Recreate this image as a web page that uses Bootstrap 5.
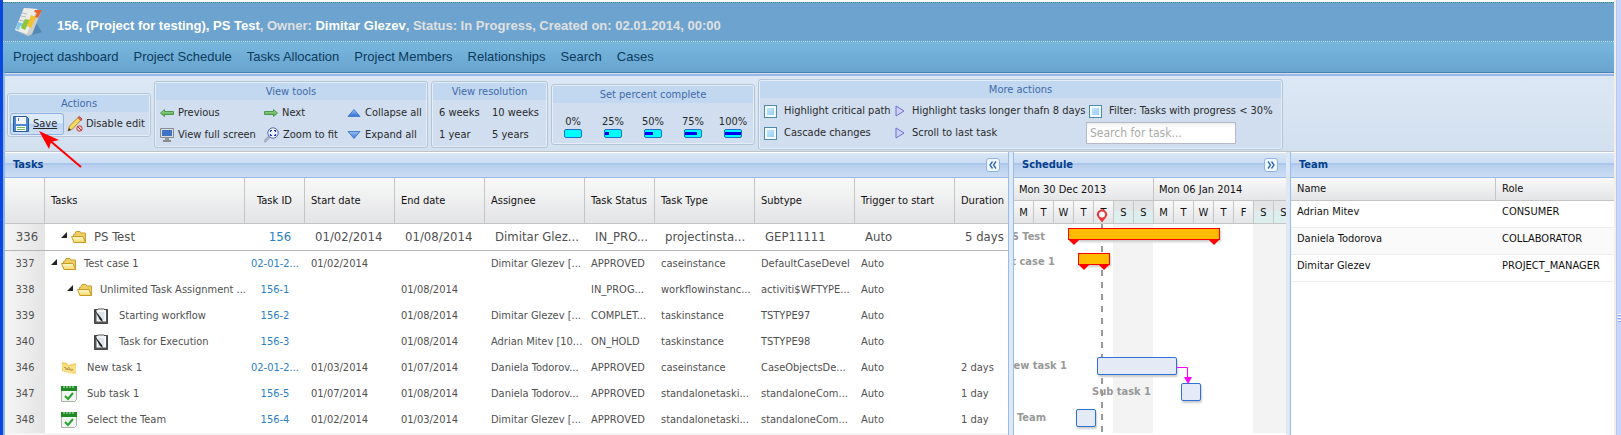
<!DOCTYPE html>
<html lang="en">
<head>
<meta charset="utf-8">
<meta name="viewport" content="width=device-width, initial-scale=1">
<title>PS Test - Project Schedule</title>
<link href="https://cdn.jsdelivr.net/npm/bootstrap@5.3.0/dist/css/bootstrap.min.css" rel="stylesheet">
<style>
body{font-family:"DejaVu Sans Condensed","DejaVu Sans",sans-serif;font-size:11px;line-height:16px;color:#222;background:#fff;overflow:hidden}
a{text-decoration:none}
svg{display:block;flex:none}
.frame{border-left:3px solid #0a46e0}
.edge{width:7px;border-left:2px solid #f3efe6;background:linear-gradient(90deg,#b4c7f5 1px,#c6d6fc 1px)}
.grip{width:3px;height:8px;margin:314px 0 0 auto;background:repeating-linear-gradient(#f4f8ff 0 1px,#8fa9e6 1px 2px,#c6d6fc 2px 3px)}
.titlebar{margin-top:2px;height:40px;border-top:1px dotted #3f8a76;border-bottom:1px dotted #c4e2f1;background:#6ca3cf;padding:0 11px;gap:13px;font:bold 13px/18px "Liberation Sans",sans-serif;color:#e0e0e0}
.titlebar b{color:#fff}
.titlebar h1{font:inherit;padding-top:7px}
.mainnav{height:30px;background:linear-gradient(#77b7de,#69a4cf);padding:0 10px;gap:15px;font:13px/30px "Liberation Sans",sans-serif}
.mainnav a{color:#0b3a5c}
.tools{border-top:1px solid #4682b4;box-shadow:inset 0 1px #d5e0ee,inset 0 3px #99b8ea;background:linear-gradient(#dde8f5,#d2e0ef);border-bottom:1px solid #c0c4c8;height:80px;padding:5px 4px 0;gap:3px}
.tgroup{border:1px solid #b4c5d6;border-radius:3px;padding:1px;background:#e4edf8;flex:none}
.tgroup h2{margin:0;font-size:11px;font-weight:400;line-height:17px;text-align:center;background:#c2d8f0;color:#3e6aaa}
.tbody{background:#d0deef;display:grid;grid-auto-rows:22px;align-items:center;color:#2a2a2a}
.tb{border:0;background:none;padding:0;display:flex;align-items:center;gap:4px;color:#2a2a2a;white-space:nowrap;text-align:left}
.g-act .tbody{grid-template-columns:54px 84px;padding:1px 1px 0}
.g-act .save{border:1px solid #8db2e3;border-radius:3px;background:linear-gradient(#dceafa 45%,#bcd3f2 50%,#cfe0f6);height:22px;padding-left:2px;text-decoration:underline}
.g-act .dis{padding-left:3px;gap:3px}
.g-view .tbody{grid-template-columns:104px 83px 79px;padding:2px 0 0 4px}
.g-res .tbody{grid-template-columns:53px 54px;padding:2px 0 0 6px}
.g-pct .tbody{grid-template-columns:repeat(5,40px);grid-auto-rows:40px;padding:0}
.pct{flex-direction:column;gap:0;justify-content:flex-end;padding-top:6px;line-height:14px}
.meter{width:18px;height:9px;border:1px solid #1c6fd0;border-radius:2px;background:#0ff;padding:2px 0}
.meter i{display:block;height:3px;background:#0000f0}
.g-more .tbody{grid-template-columns:131px 194px 192px;padding:2px 0 4px 4px}
.g-more .tb{gap:7px}
.chk{appearance:none;flex:none;width:13px;height:13px;margin:0 7px 0 0;border:1px solid #4f8aa6;background:linear-gradient(135deg,#cfeafd,#8cc9f3);box-shadow:inset 0 0 0 2px #f4fbff}
.find{width:150px;height:22px;border:1px solid #b5b8c8;background:linear-gradient(#eee,#fff 4px);font-size:12px;padding:0 3px;margin-left:-3px}
.find::placeholder{color:#aaa}
.panel-head{height:26px;padding:0 8px;border-top:1px solid #fff;border-bottom:1px solid #99bce8;background:linear-gradient(#dae7f6,#cbddf3 10px,#abc7ec 10px,#abc7ec 12px,#b8cfee 12px,#cbddf3)}
.panel-head h2{margin:0;font-size:11px;font-weight:700;color:#04408c}
.fold{width:14px;height:14px;border:1px solid #8db2e3;border-radius:3px;background:#f2f8ff;padding:0;display:grid;place-items:center}
.p-tasks{width:1004px;flex:none;border-right:1px solid #99bce8;background:#f5f5f5}
.p-sched{width:273px;flex:none;border-left:1px solid #99bce8;margin-left:4px;background:#fff;overflow:hidden}
.p-team{border-left:1px solid #99bce8;margin-left:4px;min-width:0}
.panes{background:#dfe8f6}
.tools,.panes{border-left:2px solid #8fb4ea}
.tools{padding-left:2px}
table{table-layout:fixed;width:100%;border-collapse:separate;border-spacing:0}
th{font-weight:400;color:#111;background:linear-gradient(#f9f9f9,#e3e4e6);border-right:1px solid #c5c5c5;border-bottom:1px solid #c5c5c5}
th:last-child{border-right:0}
th,td{padding:0 0 0 6px;white-space:nowrap;overflow:hidden}
.tasks th{height:46px;padding-top:1px}
.tasks td{height:26px;background:#fff;color:#505050}
.tasks tr.root td{height:27px;font-size:13px;padding-left:10px;border-bottom:1px solid #b5b5b5}
.tasks td:first-child{background:linear-gradient(90deg,#f5f5f5,#e4e4e4);padding:0;text-align:center}
.tasks tr.root td:first-child{padding-left:4px}
.tasks td:nth-child(3),.tasks th:nth-child(3){text-align:center;padding-left:0;padding-right:0}
.tasks td a{color:#2a7fc4}
.tasks tr.root td:nth-child(2),.tasks td:nth-child(2){padding-left:6px;overflow:visible}
.node{display:flex;align-items:center;gap:7px}
.tree{display:flex;align-items:center}
.tree .tw{margin:0 4px 5px 0}
.leaf{gap:10px;padding-left:10px}
.root .node{padding-left:10px}
.d1{padding-left:16px}
.node.d2{padding-left:42px}
.team th{height:23px}
.team td{height:27px;color:#111;border-bottom:1px solid #ededed;padding-bottom:4px}
.team tr:nth-child(even) td{background:#fafafa}
.weeks,.days{display:flex;background:linear-gradient(#f9f9f9,#e3e4e6);color:#111}
.weeks span{height:23px;line-height:24px;flex:0 0 140px;padding-left:5px;border-right:1px solid #c5c5c5;border-bottom:1px solid #c5c5c5}
.days span{flex:0 0 20px;height:23px;line-height:23px;text-align:center;border-right:1px solid #c5c5c5;border-bottom:1px solid #c5c5c5}
.days .we{background:linear-gradient(#e4e5e7 10px,#dceeed 10px)}
.chart{position:relative;height:209px;background:linear-gradient(90deg,transparent 99px,#f3f3f3 99px,#f3f3f3 139px,transparent 139px,transparent 239px,#f3f3f3 239px);overflow:hidden}
.lane{position:relative;height:26px}
.lane:first-child{height:27px}
.gbar{position:absolute;top:3px;height:18px;border:1px solid #2f72d6;border-radius:2px;background:#e4ebf6;box-shadow:1px 2px 2px #ccc}
.gbar.sum{height:12px;border:1px solid #f00;border-radius:0;background:#ffbc00}
.lane:first-of-type .gbar{top:4px}
.gbar em{position:absolute;right:100%;top:0;margin-right:31px;white-space:nowrap;font-style:normal;font-weight:700;color:#999}
.gbar.sum em{margin-right:24px}
.sum::before,.sum::after{content:"";position:absolute;top:11px;border:5px solid transparent;border-top-color:#f00;border-bottom:0}
.sum::before{left:0}
.sum::after{right:0}
.overlay{position:absolute;left:0;top:0}
.pin{position:absolute;left:82px;top:-15px;z-index:2}
.pointer{position:absolute;left:36px;top:130px;z-index:3}
</style>
</head>
<body>
<svg width="0" height="0" class="position-absolute" aria-hidden="true">
<defs>
<linearGradient id="fy" x2="0" y2="1"><stop stop-color="#fffbd0"/><stop offset="1" stop-color="#f6d766"/></linearGradient>
<symbol id="folder" viewBox="0 0 16 14"><path d="M2.500 12V4.500h1l1.500-3h4l1 1.500h4.500v9.500z" fill="#efcf62" stroke="#c79f35"/><path d="M.5 6.500h11.500l2.500 6H3z" fill="url(#fy)" stroke="#c79a25"/></symbol>
<symbol id="tw" viewBox="0 0 6 6"><path d="M6 0v6H0z" fill="#222"/></symbol>
<symbol id="clip" viewBox="0 0 16 16"><path d="M1.500 1.500h13v14h-13z" fill="#555" stroke="#444"/><path d="M3.500 2h9.500v11.500h-9.500z" fill="#f4f6f8"/><path d="M5 5h6M5 7h6M5 9h6M5 11h6" stroke="#c9d3de"/><path d="M5 0h6v2H5z" fill="#aaa"/><path d="M1 1l8 10 1 3-3-2z" fill="#222"/></symbol>
<symbol id="case" viewBox="0 0 16 14"><path d="M1 1l5 1 1 2 8-2v11L8 12l-7-2z" fill="#f3cf62"/><path d="M1 3l7 2 7-1v9L2 10z" fill="#fadf86"/><path d="M3 7q1-2 2 0t2 0 2 1 3 0M4 8l8 1" fill="none" stroke="#b89a50"/></symbol>
<symbol id="cal" viewBox="0 0 16 16"><path d="M.5.500h15v13l-2 2H.5z" fill="#f3f5f3" stroke="#aab2aa"/><path d="M0 0h16v5H0z" fill="#1d8a24"/><path d="M3 0v2M6 0v2M9 0v2M12 0v2" stroke="#d5f0d5"/><path d="M4 10l3 3 5-6" fill="none" stroke="#23a52b" stroke-width="2"/></symbol>
<linearGradient id="gg" x2="0" y2="1"><stop stop-color="#b4e3a1"/><stop offset="1" stop-color="#3d9d3d"/></linearGradient>
<linearGradient id="bg" x2="0" y2="1"><stop stop-color="#9cc4fa"/><stop offset="1" stop-color="#2f6cd8"/></linearGradient>
<symbol id="arr" viewBox="0 0 14 8"><path d="M.5 4L4.500.500V2.500h9v3h-9v2z" fill="url(#gg)" stroke="#4a9a4a"/></symbol>
<symbol id="tri" viewBox="0 0 10 12"><path d="M1 1l8 5-8 5z" fill="#cfd0fb" stroke="#6f6fd0"/></symbol>
</defs>
</svg>
<div class="frame d-flex min-vh-100">
<div class="flex-grow-1 d-flex flex-column overflow-hidden">
<header>
<div class="titlebar d-flex align-items-center">
<svg width="30" height="30" viewBox="0 0 28 30"><path d="M17 28l10-3-6-9z" fill="#3d6f98" opacity=".5"/><path d="M9 1l13 1 4 3-9 22-4 2L0 23z" fill="#cfcfca"/><path d="M9 1l13 1-10 25L0 23z" fill="#ecece9"/><path d="M7 6l5 1M6 9l5 1M4 13l5 1" stroke="#bbb"/><path d="M3 15l7 2-1 3-4-1-1 4-3-1z" fill="#7cc8e6"/><path d="M10 12l5 1-5 10-4-2 2-5z" fill="#8cc63f"/><path d="M16 8l5 2-5 11-4-2z" fill="#f0c330"/><path d="M20 3l7 0-4 8-3-1 2-4-3-1z" fill="#e8642c"/></svg>
<h1 class="m-0"><b>156, (Project for testing), PS Test</b>, Owner: <b>Dimitar Glezev</b>, Status: In Progress, Created on: 02.01.2014, 00:00</h1>
</div>
<nav class="mainnav d-flex"><a href="#">Project dashboard</a><a href="#">Project Schedule</a><a href="#">Tasks Allocation</a><a href="#">Project Members</a><a href="#">Relationships</a><a href="#">Search</a><a href="#">Cases</a></nav>
</header>
<div class="tools d-flex align-items-center">
<section class="tgroup g-act"><h2>Actions</h2><div class="tbody">
<button class="tb save"><svg width="16" height="16" viewBox="0 0 16 16"><path d="M.5.500h13l2 2v13H.5z" fill="#4c86d0" stroke="#2a5ba0"/><path d="M3 1h10v7H3z" fill="#f1f5fb"/><path d="M5 2h1v3H5z" fill="#4c86d0"/><path d="M3 10h10v5H3z" fill="#fff"/><path d="M4 11.500h8M4 13.500h8" stroke="#6fbd5a"/></svg>Save</button>
<button class="tb dis"><svg width="16" height="16" viewBox="0 0 16 16"><path d="M1 15l1.500-5L11 1.500 14 4 5.500 13z" fill="#f7d960" stroke="#b28a2c"/><path d="M11 1.500l1.500-1L15 3l-1 1.500z" fill="#e06868" stroke="#b44"/><path d="M1 15l1-3 2 2z" fill="#333"/><circle cx="12.500" cy="12.500" r="2.700" fill="#f8d0d0" stroke="#c92c2c"/><path d="M10.500 10.500l4 4" stroke="#c92c2c"/></svg>Disable edit</button>
</div></section>
<section class="tgroup g-view"><h2>View tools</h2><div class="tbody">
<button class="tb"><svg width="14" height="8"><use href="#arr"/></svg>Previous</button>
<button class="tb"><svg width="14" height="8" viewBox="0 0 14 8"><path d="M13.500 4L9.500.500V2.500h-9v3h9v2z" fill="url(#gg)" stroke="#4a9a4a"/></svg>Next</button>
<button class="tb"><svg width="14" height="8" viewBox="0 0 14 8"><path d="M7 .5L13 7.500H1z" fill="url(#bg)" stroke="#4a7fd0"/></svg>Collapse all</button>
<button class="tb"><svg width="14" height="16" viewBox="0 0 14 16"><path d="M.5 1.500h13v9H.5z" fill="#d8dbe0" stroke="#888d95"/><path d="M2 3h10v6H2z" fill="#3f74c4"/><path d="M5 11h4v2H5z" fill="#999"/><path d="M3 14h8" stroke="#8a8a8a" stroke-width="2"/></svg>View full screen</button>
<button class="tb"><svg width="15" height="16" viewBox="0 0 15 16"><path d="M5 10L1 14" stroke="#a9adc0" stroke-width="3" stroke-linecap="round"/><circle cx="9" cy="6" r="5.200" fill="#eef3ff" stroke="#5569b8"/><path d="M6.500 5V3.500H8M10 3.500h1.500V5M11.500 7v1.500H10M8 8.500H6.500V7" fill="none" stroke="#2336c8" stroke-width="1.200"/></svg>Zoom to fit</button>
<button class="tb"><svg width="14" height="8" viewBox="0 0 14 8"><path d="M7 7.500L13 .5H1z" fill="url(#bg)" stroke="#4a7fd0"/></svg>Expand all</button>
</div></section>
<section class="tgroup g-res"><h2>View resolution</h2><div class="tbody">
<button class="tb">6 weeks</button><button class="tb">10 weeks</button><button class="tb">1 year</button><button class="tb">5 years</button>
</div></section>
<section class="tgroup g-pct"><h2>Set percent complete</h2><div class="tbody">
<button class="tb pct">0%<span class="meter"><i style="width:0%"></i></span></button>
<button class="tb pct">25%<span class="meter"><i style="width:25%"></i></span></button>
<button class="tb pct">50%<span class="meter"><i style="width:50%"></i></span></button>
<button class="tb pct">75%<span class="meter"><i style="width:75%"></i></span></button>
<button class="tb pct">100%<span class="meter"><i style="width:100%"></i></span></button>
</div></section>
<section class="tgroup g-more"><h2>More actions</h2><div class="tbody">
<label class="d-flex align-items-center"><input class="chk" type="checkbox">Highlight critical path</label>
<button class="tb"><svg width="10" height="12"><use href="#tri"/></svg>Highlight tasks longer thafn 8 days</button>
<label class="d-flex align-items-center"><input class="chk" type="checkbox">Filter: Tasks with progress &lt; 30%</label>
<label class="d-flex align-items-center"><input class="chk" type="checkbox">Cascade changes</label>
<button class="tb"><svg width="10" height="12"><use href="#tri"/></svg>Scroll to last task</button>
<input class="find" type="text" placeholder="Search for task..." aria-label="Search for task">
</div></section>
</div>
<main class="panes d-flex flex-grow-1">
<section class="p-tasks">
<div class="panel-head d-flex align-items-center justify-content-between"><h2>Tasks</h2><button class="fold" aria-label="Collapse"><svg width="8" height="8" viewBox="0 0 8 8"><path d="M3.500 .5L1 4l2.500 3.500M7 .5L4.500 4 7 7.500" fill="none" stroke="#2c66ad" stroke-width="1.300"/></svg></button></div>
<table class="tasks">
<colgroup><col style="width:40px"><col style="width:200px"><col style="width:60px"><col style="width:90px"><col style="width:90px"><col style="width:100px"><col style="width:70px"><col style="width:100px"><col style="width:100px"><col style="width:100px"><col></colgroup>
<thead><tr><th></th><th>Tasks</th><th>Task ID</th><th>Start date</th><th>End date</th><th>Assignee</th><th>Task Status</th><th>Task Type</th><th>Subtype</th><th>Trigger to start</th><th>Duration</th></tr></thead>
<tbody>
<tr class="root"><td>336</td><td><div class="node"><span class="tree"><svg class="tw" width="6" height="6"><use href="#tw"/></svg><svg width="16" height="14"><use href="#folder"/></svg></span>PS Test</div></td><td><a href="#">156</a></td><td>01/02/2014</td><td>01/08/2014</td><td>Dimitar Glez...</td><td>IN_PRO...</td><td>projectinsta...</td><td>GEP11111</td><td>Auto</td><td>5 days</td></tr>
<tr><td>337</td><td><div class="node"><span class="tree"><svg class="tw" width="6" height="6"><use href="#tw"/></svg><svg width="16" height="14"><use href="#folder"/></svg></span>Test case 1</div></td><td><a href="#">02-01-2...</a></td><td>01/02/2014</td><td></td><td>Dimitar Glezev [...</td><td>APPROVED</td><td>caseinstance</td><td>DefaultCaseDevel</td><td>Auto</td><td></td></tr>
<tr><td>338</td><td><div class="node d1"><span class="tree"><svg class="tw" width="6" height="6"><use href="#tw"/></svg><svg width="16" height="14"><use href="#folder"/></svg></span>Unlimited Task Assignment ...</div></td><td><a href="#">156-1</a></td><td></td><td>01/08/2014</td><td></td><td>IN_PROG...</td><td>workflowinstanc...</td><td>activiti$WFTYPE...</td><td>Auto</td><td></td></tr>
<tr><td>339</td><td><div class="node leaf d2"><svg width="16" height="16"><use href="#clip"/></svg>Starting workflow</div></td><td><a href="#">156-2</a></td><td></td><td>01/08/2014</td><td>Dimitar Glezev [...</td><td>COMPLET...</td><td>taskinstance</td><td>TSTYPE97</td><td>Auto</td><td></td></tr>
<tr><td>340</td><td><div class="node leaf d2"><svg width="16" height="16"><use href="#clip"/></svg>Task for Execution</div></td><td><a href="#">156-3</a></td><td></td><td>01/08/2014</td><td>Adrian Mitev [10...</td><td>ON_HOLD</td><td>taskinstance</td><td>TSTYPE98</td><td>Auto</td><td></td></tr>
<tr><td>346</td><td><div class="node leaf"><svg width="16" height="14"><use href="#case"/></svg>New task 1</div></td><td><a href="#">02-01-2...</a></td><td>01/03/2014</td><td>01/07/2014</td><td>Daniela Todorov...</td><td>APPROVED</td><td>caseinstance</td><td>CaseObjectsDe...</td><td>Auto</td><td>2 days</td></tr>
<tr><td>347</td><td><div class="node leaf"><svg width="16" height="16"><use href="#cal"/></svg>Sub task 1</div></td><td><a href="#">156-5</a></td><td>01/07/2014</td><td>01/08/2014</td><td>Daniela Todorov...</td><td>APPROVED</td><td>standalonetaski...</td><td>standaloneCom...</td><td>Auto</td><td>1 day</td></tr>
<tr><td>348</td><td><div class="node leaf"><svg width="16" height="16"><use href="#cal"/></svg>Select the Team</div></td><td><a href="#">156-4</a></td><td>01/02/2014</td><td>01/03/2014</td><td>Dimitar Glezev [...</td><td>APPROVED</td><td>standalonetaski...</td><td>standaloneCom...</td><td>Auto</td><td>1 day</td></tr>
</tbody></table>
</section>
<section class="p-sched">
<div class="panel-head d-flex align-items-center justify-content-between"><h2>Schedule</h2><button class="fold" aria-label="Expand"><svg width="8" height="8" viewBox="0 0 8 8"><path d="M1 .5L3.500 4 1 7.500M4.500 .5L7 4 4.500 7.500" fill="none" stroke="#2c66ad" stroke-width="1.300"/></svg></button></div>
<div class="weeks"><span>Mon 30 Dec 2013</span><span>Mon 06 Jan 2014</span></div>
<div class="days"><span>M</span><span>T</span><span>W</span><span>T</span><span>T</span><span class="we">S</span><span class="we">S</span><span>M</span><span>T</span><span>W</span><span>T</span><span>F</span><span class="we">S</span><span class="we">S</span></div>
<div class="position-relative">
<svg class="pin" width="12" height="14" viewBox="0 0 12 14"><path d="M6 13.500L2 8.500a5 5 0 1 1 8 0z" fill="#e8393c"/><circle cx="6" cy="5.500" r="3" fill="#fff"/></svg>
<div class="chart">
<svg class="overlay" width="272" height="209"><path d="M88 0V209" stroke="#999" stroke-width="2" stroke-dasharray="6 6" stroke-dashoffset="2"/></svg>
<div class="lane"><div class="gbar sum" style="left:54px;width:152px"><em>PS Test</em></div></div>
<div class="lane"><div class="gbar sum" style="left:64px;width:32px"><em>Test case 1</em></div></div>
<div class="lane"></div><div class="lane"></div><div class="lane"></div>
<div class="lane"><div class="gbar" style="left:83px;width:80px"><em>New task 1</em></div></div>
<div class="lane"><div class="gbar" style="left:167px;width:20px"><em>Sub task 1</em></div></div>
<div class="lane"><div class="gbar" style="left:62px;width:20px"><em>Select the Team</em></div></div>
<svg class="overlay" width="272" height="209"><path d="M163 143.500h10.500V153" fill="none" stroke="#f0f"/><path d="M170 153h8l-4 7z" fill="#f0f"/></svg>
</div></div>
</section>
<section class="p-team flex-grow-1 bg-white">
<div class="panel-head d-flex align-items-center"><h2>Team</h2></div>
<table class="team"><colgroup><col style="width:205px"><col></colgroup>
<thead><tr><th>Name</th><th>Role</th></tr></thead>
<tbody><tr><td>Adrian Mitev</td><td>CONSUMER</td></tr><tr><td>Daniela Todorova</td><td>COLLABORATOR</td></tr><tr><td>Dimitar Glezev</td><td>PROJECT_MANAGER</td></tr></tbody></table>
</section>
</main>
</div>
<div class="edge flex-shrink-0"><div class="grip"></div></div>
</div>
<svg class="pointer" width="48" height="40" viewBox="0 0 48 40"><path d="M12 9L45 37" stroke="#f00" stroke-width="2"/><path d="M3 1l20 9-8 2-2 7z" fill="#f00"/></svg>
<script src="https://cdn.jsdelivr.net/npm/bootstrap@5.3.0/dist/js/bootstrap.bundle.min.js"></script>
</body>
</html>
